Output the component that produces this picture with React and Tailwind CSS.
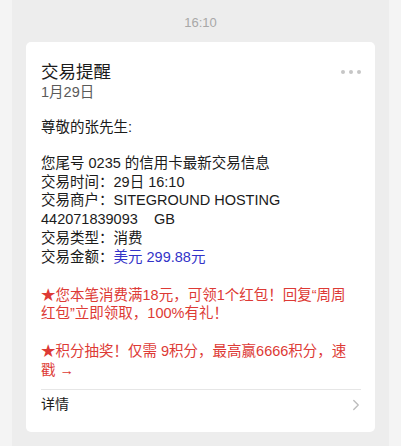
import { ChevronRight } from 'lucide-react';

const font = { fontFamily: '"Liberation Sans", "Noto Sans CJK SC", sans-serif' };

export default function App() {
  return (
    <div className="min-h-[446px] w-[401px] bg-[#f4f4f4]" style={font}>
      <div className="mx-[12px] min-h-[446px] bg-[#ededed] px-[14px]">
        {/* time stamp */}
        <div className="flex h-[42px] items-center justify-center pt-[4px] text-[13px] text-[#a8a8a8]">16:10</div>

        {/* card */}
        <div className="rounded-[5px] bg-white pl-[15px] pr-[14px] pt-[19px] pb-[12px]">
          <div className="flex items-start justify-between">
            <div>
              <div className="text-[17.5px] leading-[22px] text-[#1b1b1b]">交易提醒</div>
              <div className="text-[14.5px] leading-[18px] text-[#5a5a5a]">1月29日</div>
            </div>
            <div className="mt-[9px] flex gap-[4px]">
              <span className="h-[4px] w-[4px] rounded-full bg-[#c6c6c6]" />
              <span className="h-[4px] w-[4px] rounded-full bg-[#c6c6c6]" />
              <span className="h-[4px] w-[4px] rounded-full bg-[#c6c6c6]" />
            </div>
          </div>

          <div className="mt-[17px] text-[14.5px] leading-[18.8px] text-[#1b1b1b]">
            <p>尊敬的张先生:</p>
            <p className="mt-[17px]">您尾号 0235 的信用卡最新交易信息</p>
            <p>交易时间：29日 16:10</p>
            <p>交易商户：SITEGROUND HOSTING</p>
            <p className="whitespace-pre">442071839093    GB</p>
            <p>交易类型：消费</p>
            <p>
              交易金额：<span className="text-[#3333c8]">美元 299.88元</span>
            </p>
            <p className="mt-[19px] pr-[10px] text-[#dd3a35]">
              ★您本笔消费满18元，可领1个红包！回复“周周红包”立即领取，100%有礼！
            </p>
            <p className="mt-[19px] pr-[4px] text-[#dd3a35]">
              ★积分抽奖！仅需 9积分，最高赢6666积分，速戳 →
            </p>
          </div>

          <div className="mt-[9px] flex h-[31px] items-center justify-between border-t border-[#e6e6e6]">
            <span className="text-[14px] text-[#1b1b1b]">详情</span>
            <ChevronRight size={18} strokeWidth={1.8} className="mr-[-4px] text-[#bdbdbd]" />
          </div>
        </div>
      </div>
    </div>
  );
}
